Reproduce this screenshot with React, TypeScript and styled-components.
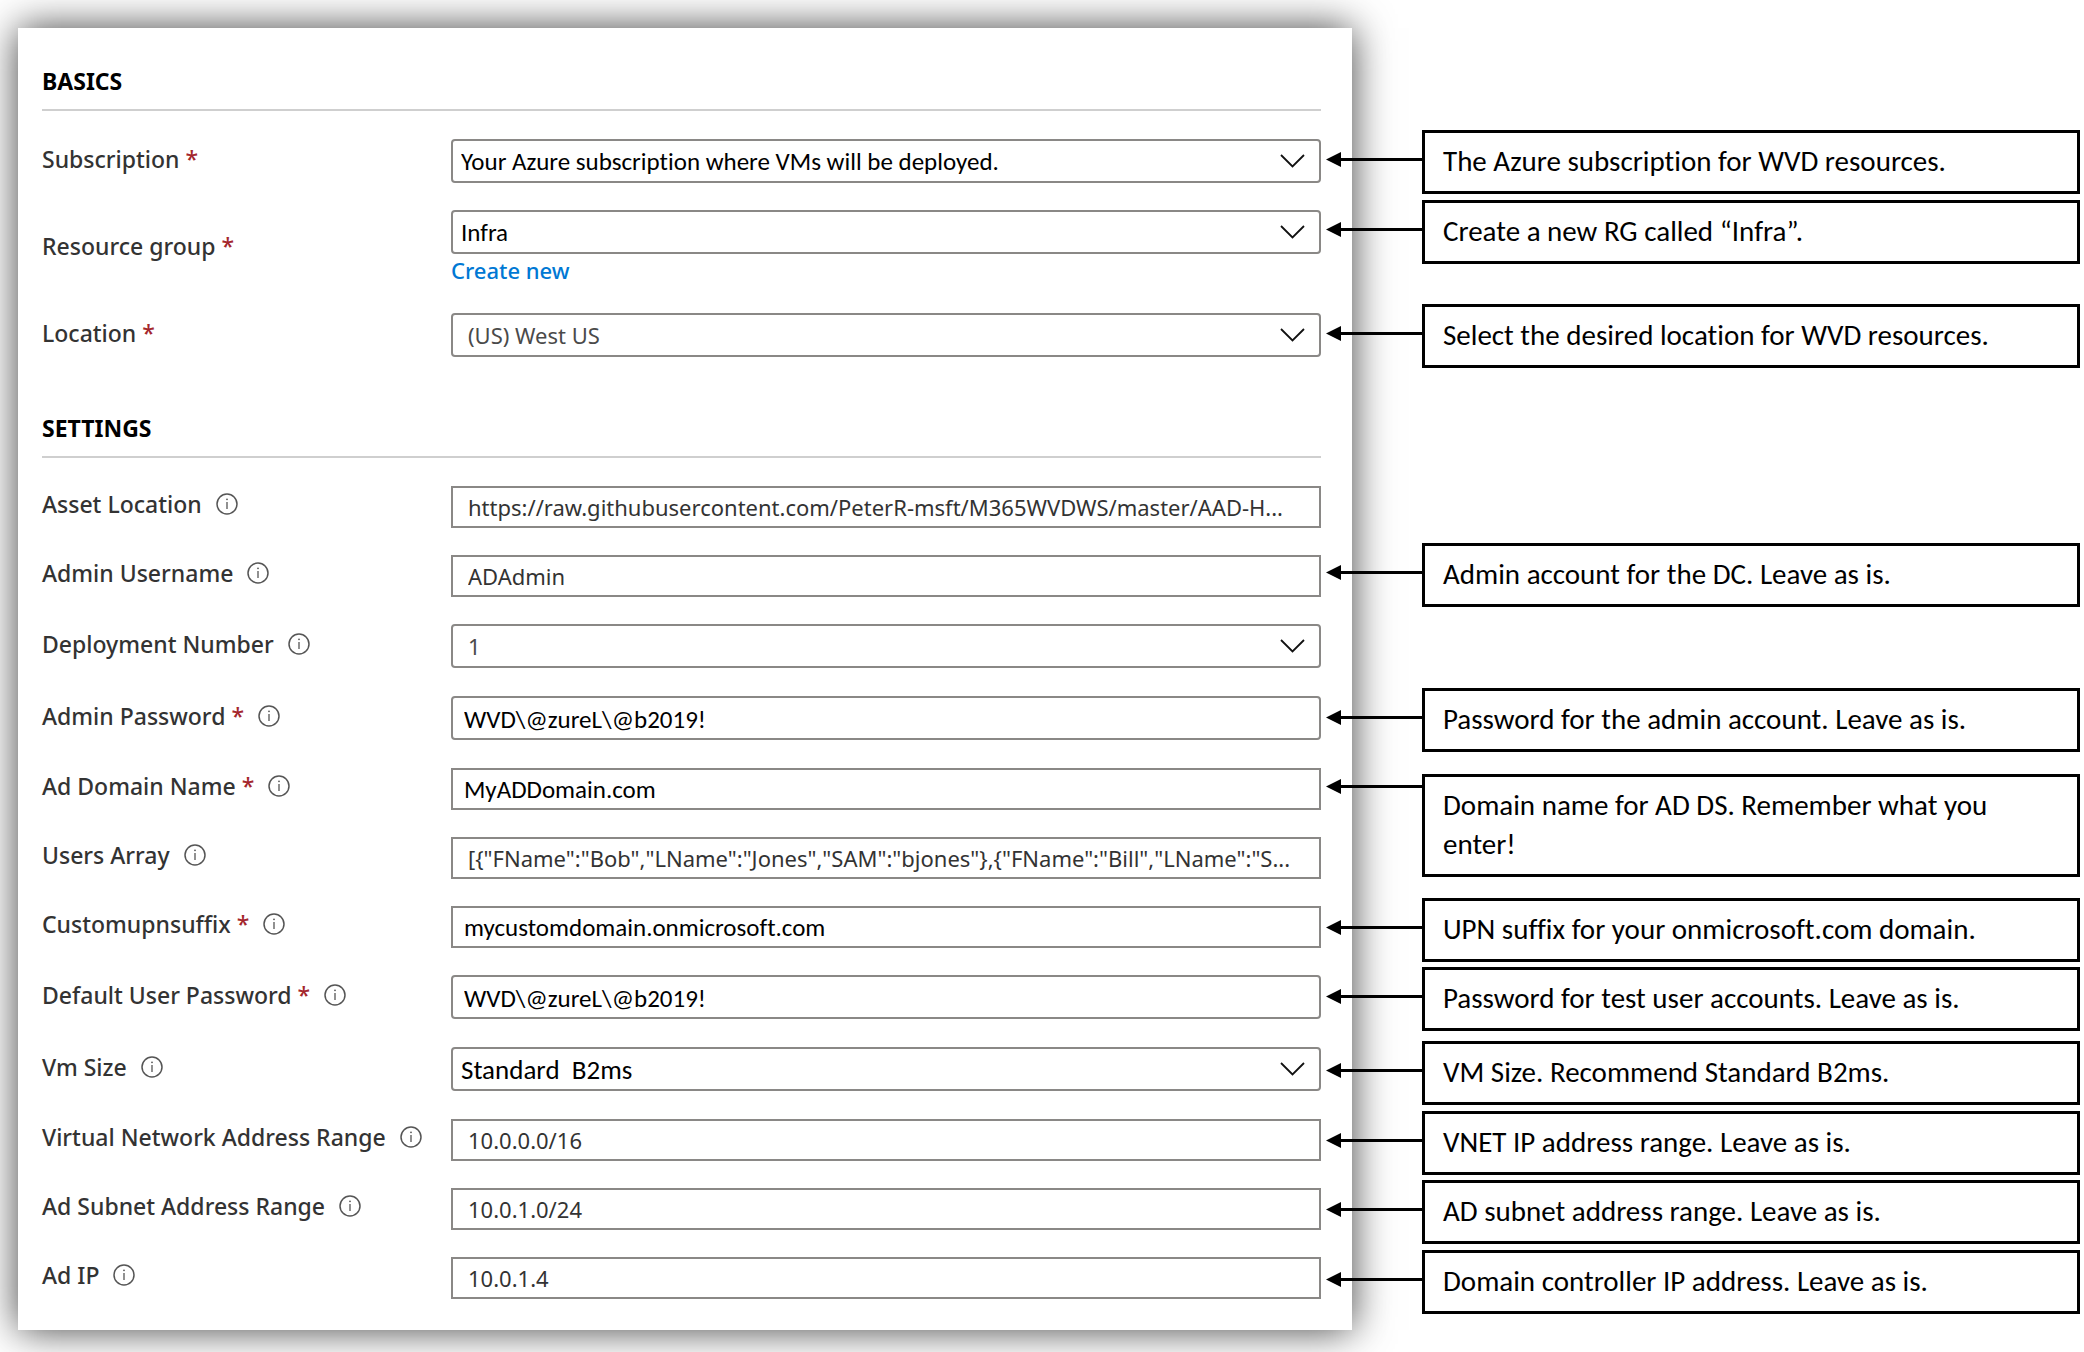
import React, { useState } from "react";
import styled, { createGlobalStyle, css } from "styled-components";

const ink = "#000000";
const labelFont = `"Segoe UI", "Noto Sans", sans-serif`;
const noteFont = `Calibri, Carlito, "Open Sans", sans-serif`;

const GlobalStyle = createGlobalStyle`
  *, *::before, *::after { box-sizing: border-box; }
  body { margin: 0; background: #ffffff; font-variant-ligatures: none; }
`;

const Page = styled.main`
  display: grid;
  grid-template-columns: minmax(0, 1fr) 658px;
  column-gap: 70px;
  align-items: start;
  padding: 28px 4px 22px 18px;
`;

const Card = styled.form`
  padding: 38px 31px 31px 24px;
  background: #ffffff;
  box-shadow: 0 0 38px rgba(0, 0, 0, 0.75);
  font-family: ${labelFont};
`;

const Section = styled.section`
  & + & {
    margin-top: 55px;
  }
`;

const SectionTitle = styled.h2`
  margin: 0 0 28px;
  padding-bottom: 13px;
  border-bottom: 2px solid #cfcfcf;
  color: ${ink};
  font-size: 23px;
  font-weight: 700;
  line-height: 30px;
`;

const Rows = styled.div<{ $gap: number }>`
  display: grid;
  row-gap: ${(p) => p.$gap}px;
`;

const Row = styled.div`
  display: grid;
  grid-template-columns: 409px minmax(0, 1fr);
  align-items: center;
`;

const LabelCell = styled.div`
  display: flex;
  align-items: center;
  gap: 14px;
  padding-bottom: 6px;
  color: #333333;
  font-size: 23px;
  font-weight: 500;
  line-height: 30px;
`;

const Required = styled.span`
  margin-left: 6px;
  color: #a4262c;
`;

const InfoButton = styled.button`
  display: flex;
  padding: 0;
  border: 0;
  background: none;
  color: #555555;
  cursor: pointer;
`;

const controlStyle = css<{ $entered?: boolean; $size?: number }>`
  display: block;
  width: 100%;
  margin: 0;
  border: 2px solid #8a8886;
  background: #ffffff;
  font-family: ${(p) => (p.$entered ? noteFont : labelFont)};
  font-size: ${(p) => p.$size ?? (p.$entered ? 25 : 22)}px;
  font-variant-ligatures: none;
  outline: none;
`;

const TextBox = styled.input<{ $entered?: boolean; $size?: number; $rounded?: boolean }>`
  ${controlStyle}
  height: ${(p) => (p.$rounded ? 44 : 42)}px;
  margin-bottom: ${(p) => (p.$rounded ? 1 : 0)}px;
  padding: ${(p) => (p.$rounded ? 3 : 0)}px 4px 0 ${(p) => (p.$entered ? 11 : 15)}px;
  border-radius: ${(p) => (p.$rounded ? 4 : 0)}px;
  color: ${(p) => (p.$entered ? ink : "#333333")};
  text-overflow: ellipsis;
`;

const SelectWrap = styled.div`
  display: grid;
  align-items: center;
  margin-bottom: 1px;
`;

const SelectBox = styled.select<{ $entered?: boolean; $size?: number }>`
  ${controlStyle}
  grid-area: 1 / 1;
  height: 44px;
  padding: 0 48px 0 ${(p) => (p.$entered ? 8 : 15)}px;
  border-radius: 4px;
  color: ${(p) => (p.$entered ? ink : "#4a4a4a")};
  appearance: none;
`;

const Chevron = styled.svg`
  grid-area: 1 / 1;
  justify-self: end;
  margin-right: 16px;
  pointer-events: none;
`;

const CreateLink = styled.a`
  display: block;
  width: fit-content;
  margin-top: 2px;
  padding-bottom: 3px;
  color: #0078d4;
  font-size: 22px;
  font-weight: 500;
  line-height: 28px;
  text-decoration: none;
`;

const Notes = styled.aside`
  display: flex;
  flex-direction: column;
`;

const Note = styled.div<{ $before: number }>`
  position: relative;
  margin-top: ${(p) => p.$before}px;
  padding: 9px 36px 10px 18px;
  border: 3px solid ${ink};
  background: #ffffff;
  color: ${ink};
  font-family: ${noteFont};
  font-size: 29px;
  line-height: 39px;
`;

const Arrow = styled.svg<{ $top?: boolean }>`
  position: absolute;
  right: 100%;
  top: ${(p) => (p.$top ? "2px" : "calc(50% - 10px)")};
`;

type Field = {
  id: string;
  label: string;
  value: string;
  kind?: "select";
  required?: boolean;
  info?: boolean;
  entered?: boolean;
  size?: number;
  rounded?: boolean;
  link?: string;
};

const basics: Field[] = [
  { id: "subscription", label: "Subscription", value: "Your Azure subscription where VMs will be deployed.", kind: "select", required: true, entered: true },
  { id: "resource-group", label: "Resource group", value: "Infra", kind: "select", required: true, entered: true, link: "Create new" },
  { id: "location", label: "Location", value: "(US) West US", kind: "select", required: true },
];

const settings: Field[] = [
  { id: "asset-location", label: "Asset Location", value: "https://raw.githubusercontent.com/PeterR-msft/M365WVDWS/master/AAD-H...", info: true },
  { id: "admin-username", label: "Admin Username", value: "ADAdmin", info: true },
  { id: "deployment-number", label: "Deployment Number", value: "1", kind: "select", info: true },
  { id: "admin-password", label: "Admin Password", value: "WVD\\@zureL\\@b2019!", required: true, info: true, entered: true, rounded: true },
  { id: "domain-name", label: "Ad Domain Name", value: "MyADDomain.com", required: true, info: true, entered: true },
  { id: "users-array", label: "Users Array", value: '[{"FName":"Bob","LName":"Jones","SAM":"bjones"},{"FName":"Bill","LName":"S...', info: true },
  { id: "upn-suffix", label: "Customupnsuffix", value: "mycustomdomain.onmicrosoft.com", required: true, info: true, entered: true },
  { id: "user-password", label: "Default User Password", value: "WVD\\@zureL\\@b2019!", required: true, info: true, entered: true, rounded: true },
  { id: "vm-size", label: "Vm Size", value: "Standard\u00a0 B2ms", kind: "select", info: true, entered: true, size: 27 },
  { id: "vnet-range", label: "Virtual Network Address Range", value: "10.0.0.0/16", info: true },
  { id: "subnet-range", label: "Ad Subnet Address Range", value: "10.0.1.0/24", info: true },
  { id: "ad-ip", label: "Ad IP", value: "10.0.1.4", info: true },
];

const notes: { text: string; before: number; top?: boolean }[] = [
  { text: "The Azure subscription for WVD resources.", before: 102 },
  { text: "Create a new RG called “Infra”.", before: 6 },
  { text: "Select the desired location for WVD resources.", before: 40 },
  { text: "Admin account for the DC. Leave as is.", before: 175 },
  { text: "Password for the admin account. Leave as is.", before: 81 },
  { text: "Domain name for AD DS. Remember what you enter!", before: 22, top: true },
  { text: "UPN suffix for your onmicrosoft.com domain.", before: 21 },
  { text: "Password for test user accounts. Leave as is.", before: 5 },
  { text: "VM Size. Recommend Standard B2ms.", before: 10 },
  { text: "VNET IP address range. Leave as is.", before: 6 },
  { text: "AD subnet address range. Leave as is.", before: 5 },
  { text: "Domain controller IP address. Leave as is.", before: 6 },
];

function InfoIcon() {
  return (
    <svg width="22" height="22" viewBox="0 0 22 22" fill="none" aria-hidden="true">
      <circle cx="11" cy="11" r="10" stroke="currentColor" strokeWidth="1.5" />
      <path d="M11 9v7" stroke="currentColor" strokeWidth="1.3" />
      <circle cx="11" cy="6.3" r="0.9" fill="currentColor" />
    </svg>
  );
}

function FieldRow({ field }: { field: Field }) {
  const [value, setValue] = useState(field.value);
  return (
    <Row>
      <LabelCell>
        <label htmlFor={field.id}>
          {field.label}
          {field.required && <Required>*</Required>}
        </label>
        {field.info && (
          <InfoButton type="button" aria-label={`About ${field.label}`}>
            <InfoIcon />
          </InfoButton>
        )}
      </LabelCell>
      <div>
        {field.kind === "select" ? (
          <SelectWrap>
            <SelectBox id={field.id} $entered={field.entered} $size={field.size} value={value} onChange={(e) => setValue(e.target.value)}>
              <option value={field.value}>{field.value}</option>
            </SelectBox>
            <Chevron width="25" height="14" viewBox="0 0 25 14" fill="none" aria-hidden="true">
              <path d="M1 1l11.5 11.5L24 1" stroke="#111111" strokeWidth="1.8" />
            </Chevron>
          </SelectWrap>
        ) : (
          <TextBox
            id={field.id}
            type="text"
            $entered={field.entered}
            $size={field.size}
            $rounded={field.rounded}
            value={value}
            onChange={(e) => setValue(e.target.value)}
          />
        )}
        {field.link && <CreateLink href="#create">{field.link}</CreateLink>}
      </div>
    </Row>
  );
}

export default function App() {
  return (
    <>
      <GlobalStyle />
      <Page>
        <Card onSubmit={(e) => e.preventDefault()}>
          <Section>
            <SectionTitle>BASICS</SectionTitle>
            <Rows $gap={26}>
              {basics.map((f) => (
                <FieldRow key={f.id} field={f} />
              ))}
            </Rows>
          </Section>
          <Section>
            <SectionTitle>SETTINGS</SectionTitle>
            <Rows $gap={27}>
              {settings.map((f) => (
                <FieldRow key={f.id} field={f} />
              ))}
            </Rows>
          </Section>
        </Card>
        <Notes>
          {notes.map((n) => (
            <Note key={n.text} $before={n.before}>
              <Arrow $top={n.top} width="99" height="15" viewBox="0 0 99 15" aria-hidden="true">
                <path d="M0 7.5L15 0v15z" fill={ink} />
                <path d="M14 7.5h85" stroke={ink} strokeWidth="3" />
              </Arrow>
              {n.text}
            </Note>
          ))}
        </Notes>
      </Page>
    </>
  );
}
